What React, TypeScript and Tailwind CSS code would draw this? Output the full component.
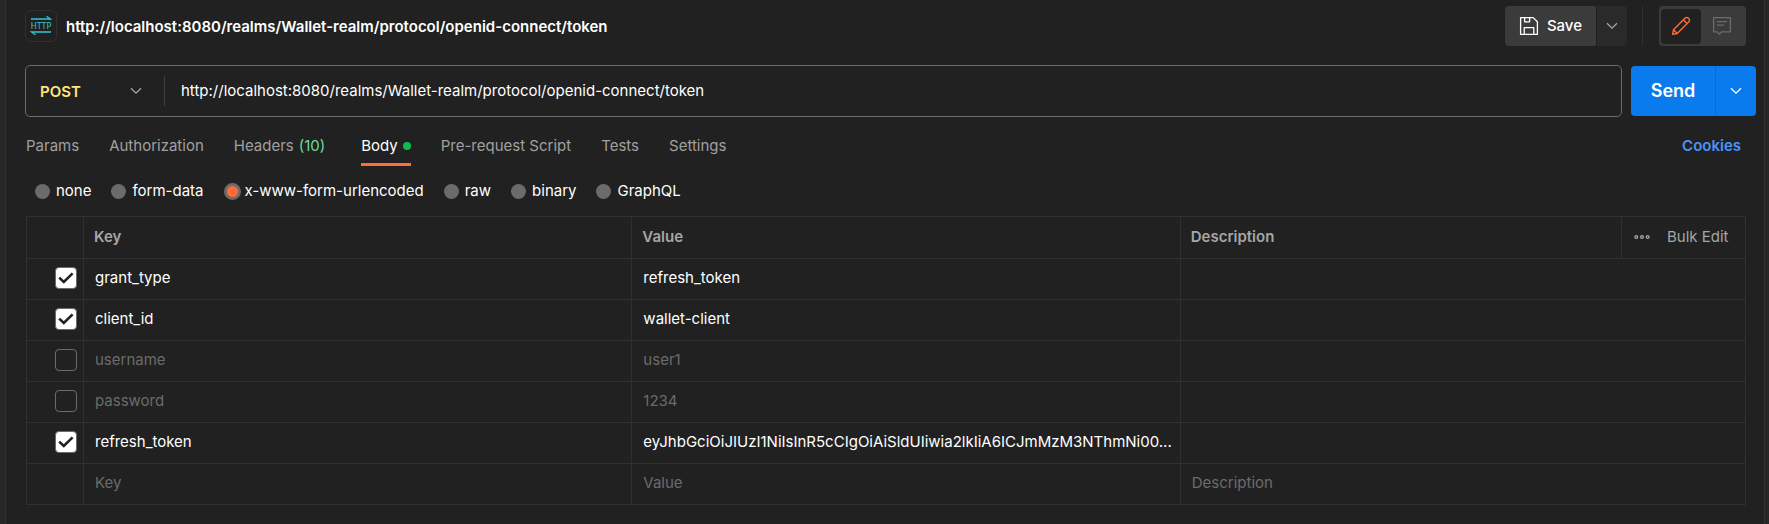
import { useState } from "react";

const METHODS = ["POST", "GET", "PUT", "PATCH", "DELETE"];
const BODY_TYPES = ["none", "form-data", "x-www-form-urlencoded", "raw", "binary", "GraphQL"];
const ENDPOINT = "http://localhost:8080/realms/Wallet-realm/protocol/openid-connect/token";

const INITIAL_ROWS = [
  { key: "grant_type", value: "refresh_token", enabled: true },
  { key: "client_id", value: "wallet-client", enabled: true },
  { key: "username", value: "user1", enabled: false },
  { key: "password", value: "1234", enabled: false },
  {
    key: "refresh_token",
    value: "eyJhbGciOiJIUzI1NiIsInR5cCIgOiAiSldUIiwia2lkIiA6ICJmMzM3NThmNi00...",
    enabled: true,
  },
];

function Chevron({ className }: { className: string }) {
  return (
    <svg className={className} width="12" height="8" viewBox="0 0 12 8" fill="none" stroke="currentColor" strokeWidth="1.3" aria-hidden="true">
      <path d="M1 1.2l5 5 5-5" />
    </svg>
  );
}

function HttpIcon() {
  return (
    <svg width="24" height="22" viewBox="0 0 24 22" fill="none" stroke="#35c4d1" strokeWidth="1.3" aria-hidden="true">
      <path d="M2 4h19.5L17.5 1.2" />
      <path d="M22 17H2.5l4 2.8" />
      <text x="12" y="13.8" textAnchor="middle" fontSize="9" fill="#35c4d1" stroke="none" fontFamily="'DejaVu Sans Condensed', 'DejaVu Sans', sans-serif">
        HTTP
      </text>
    </svg>
  );
}

function SaveIcon() {
  return (
    <svg width="20" height="20" viewBox="0 0 20 20" fill="none" stroke="currentColor" strokeWidth="1.3" strokeLinejoin="round" aria-hidden="true">
      <path d="M1.6 1.6h12.6l4.2 4.2v12.6H1.6z" />
      <path d="M5.6 1.6v4.2h5V1.6M5.2 18.4v-6.8h9.6v6.8" />
    </svg>
  );
}

function PencilIcon() {
  return (
    <svg width="20" height="20" viewBox="0 0 20 20" fill="none" stroke="currentColor" strokeWidth="1.4" strokeLinejoin="round" aria-hidden="true">
      <path d="M1.6 18.4l.9-4.6L14.2 2.1a2.1 2.1 0 0 1 3 0l.7.7a2.1 2.1 0 0 1 0 3L6.2 17.5z" />
      <path d="M2.5 13.8l3.7 3.7M12.4 3.9l3.7 3.7" />
    </svg>
  );
}

function CommentIcon() {
  return (
    <svg width="20" height="20" viewBox="0 0 20 20" fill="none" stroke="currentColor" strokeWidth="1.3" strokeLinejoin="round" aria-hidden="true">
      <path d="M1.6 1.6h16.8v14.2H9.7L7.4 18l-2.3-2.2H1.6z" />
      <path d="M5 5.6h10M5 9.2h7" />
    </svg>
  );
}

export default function App() {
  const [bodyType, setBodyType] = useState("x-www-form-urlencoded");
  const [rows, setRows] = useState(INITIAL_ROWS);
  const toggle = (i: number) => setRows(rows.map((r, n) => (n === i ? { ...r, enabled: !r.enabled } : r)));
  const tab = "h-[34px] border-b-[3px] border-transparent text-[#a0a0a0] flex items-start pt-1";

  return (
    <div className="flex min-h-screen bg-[#262626] pl-[5px] pr-1 font-['Inter',sans-serif] text-[15px] leading-5 text-white">
      <main className="min-w-0 flex-1 border-x border-[#303030] bg-[#212121] pt-1.5 pr-2 pl-[19px]">
        <header className="flex h-10 items-center pr-[10px]">
          <span className="flex size-8 items-center justify-center rounded-md border border-[#303030]">
            <HttpIcon />
          </span>
          <h1 className="ml-[9px] flex-1 pt-0.5 font-semibold">{ENDPOINT}</h1>
          <button className="flex h-10 items-center gap-2 rounded-l-[4px] rounded-r-[2px] bg-[#3b3b3b] px-[14px] font-medium">
            <SaveIcon />
            Save
          </button>
          <button aria-label="Save options" className="ml-px flex h-10 w-[30px] items-center justify-center rounded-r-[4px] bg-[#2a2a2a]">
            <Chevron className="text-[#a6a6a6]" />
          </button>
          <span className="ml-[15px] h-10 w-px bg-[#303030]" />
          <div className="ml-4 flex h-10 items-center rounded-[4px] bg-[#3b3b3b] pr-1 pl-0.5">
            <button aria-label="Edit" className="flex h-[35px] w-10 items-center justify-center rounded-[4px] bg-[#212121] text-[#ff6c37]">
              <PencilIcon />
            </button>
            <button aria-label="Comments" className="flex h-[35px] w-[41px] items-center justify-center text-[#6b6b6b]">
              <CommentIcon />
            </button>
          </div>
        </header>

        <form className="mt-[19px] flex items-center gap-[9px]" onSubmit={(e) => e.preventDefault()}>
          <div className="flex h-[52px] min-w-0 flex-1 items-center rounded-[5px] border border-[#6b6b6b]">
            <div className="grid w-[138px] items-center">
              <select aria-label="Method" className="col-start-1 row-start-1 h-12 appearance-none bg-transparent pt-0.5 pl-[14px] font-semibold text-[#ffe47e] outline-none">
                {METHODS.map((m) => (
                  <option key={m}>{m}</option>
                ))}
              </select>
              <Chevron className="pointer-events-none col-start-1 row-start-1 mr-[22px] justify-self-end text-[#a6a6a6]" />
            </div>
            <span className="h-[30px] w-px bg-[#3f3f3f]" />
            <input aria-label="Request URL" defaultValue={ENDPOINT} className="h-12 min-w-0 flex-1 bg-transparent px-4 pb-0.5 outline-none" />
          </div>
          <div className="flex h-[50px] rounded-[4px] bg-[#097bed]">
            <button type="submit" className="w-[84px] text-lg font-semibold">Send</button>
            <button type="button" aria-label="Send options" className="flex w-[41px] items-center justify-center border-l border-[#1168c9]">
              <Chevron className="text-white" />
            </button>
          </div>
        </form>

        <nav className="mt-[15px] flex items-start gap-[30px] pr-[15px] pl-px">
          <button className={tab}>Params</button>
          <button className={tab}>Authorization</button>
          <button className={tab}>
            Headers<span className="mr-1.5 ml-[5px] text-[#6bdd9a]">(10)</span>
          </button>
          <button className="flex h-[34px] items-start gap-[5px] border-b-[3px] border-[#ff6c37] pt-1">
            Body
            <span className="mt-1.5 size-2 rounded-full bg-[#0cbb52]" />
          </button>
          <button className={tab}>Pre-request Script</button>
          <button className={tab}>Tests</button>
          <button className={tab}>Settings</button>
          <a href="#cookies" className="ml-auto pt-1 font-semibold text-[#4a93f8]">Cookies</a>
        </nav>

        <fieldset className="mt-[15px] flex h-5 items-center gap-5 pl-[10px]">
          {BODY_TYPES.map((type) => (
            <label key={type} className="flex items-center">
              <input
                type="radio"
                name="body-type"
                checked={bodyType === type}
                onChange={() => setBodyType(type)}
                className="mr-1.5 size-[15px] appearance-none rounded-full bg-[#6b6b6b] checked:mr-1 checked:size-[17px] checked:border-[3px] checked:border-[#6b6b6b] checked:bg-[#ff6c37]"
              />
              {type}
            </label>
          ))}
        </fieldset>

        <div className="mt-[15px] pr-[10px] pl-px">
          <table className="w-full table-fixed border-collapse border border-[#303030] text-left [&_td]:border-b [&_td]:border-[#303030] [&_td]:pt-0 [&_td]:pb-0.5 [&_th]:border-b [&_th]:border-[#303030] [&_th]:pt-0 [&_th]:pb-0.5">
            <colgroup>
              <col className="w-[57px]" />
              <col className="w-[31.9%]" />
              <col className="w-[31.9%]" />
              <col />
              <col className="w-[124px]" />
            </colgroup>
            <thead className="text-[#a6a6a6]">
              <tr className="h-[42px]">
                <th aria-label="Enabled" />
                <th scope="col" className="border-l pl-[10px] font-semibold">Key</th>
                <th scope="col" className="border-l pl-[10px] font-semibold">Value</th>
                <th scope="col" className="border-l pl-[10px] font-semibold">Description</th>
                <th className="border-l font-normal">
                  <div className="flex items-center gap-[17px] pl-3">
                    <button aria-label="More options">
                      <svg width="16" height="6" viewBox="0 0 16 6" fill="none" stroke="currentColor" strokeWidth="1.3" aria-hidden="true">
                        <circle cx="2.3" cy="3" r="1.4" />
                        <circle cx="8" cy="3" r="1.4" />
                        <circle cx="13.7" cy="3" r="1.4" />
                      </svg>
                    </button>
                    <button>Bulk Edit</button>
                  </div>
                </th>
              </tr>
            </thead>
            <tbody>
              {rows.map((row, i) => (
                <tr key={row.key} className={row.enabled ? "h-[41px]" : "h-[41px] text-[#6b6b6b]"}>
                  <td>
                    <div className="ml-7 grid size-[22px] place-items-center">
                      <input
                        type="checkbox"
                        aria-label={`Enable ${row.key}`}
                        checked={row.enabled}
                        onChange={() => toggle(i)}
                        className="peer col-start-1 row-start-1 size-[22px] appearance-none rounded-[4px] border border-[#6b6b6b] checked:bg-white"
                      />
                      <svg className="pointer-events-none invisible col-start-1 row-start-1 peer-checked:visible" width="16" height="12" viewBox="0 0 16 12" fill="none" stroke="#212121" strokeWidth="2.6" aria-hidden="true">
                        <path d="M1.2 5.6l4.6 4.4L14.6 1.4" />
                      </svg>
                    </div>
                  </td>
                  <td className="truncate border-l pl-[11px]">{row.key}</td>
                  <td className="truncate border-l pl-[11px]">{row.value}</td>
                  <td colSpan={2} className="border-l" />
                </tr>
              ))}
              <tr className="h-[41px]">
                <td />
                <td className="border-l pl-[11px]">
                  <input aria-label="New key" placeholder="Key" className="block w-full bg-transparent outline-none placeholder:text-[#6b6b6b]" />
                </td>
                <td className="border-l pl-[11px]">
                  <input aria-label="New value" placeholder="Value" className="block w-full bg-transparent outline-none placeholder:text-[#6b6b6b]" />
                </td>
                <td colSpan={2} className="border-l pl-[11px]">
                  <input aria-label="New description" placeholder="Description" className="block w-full bg-transparent outline-none placeholder:text-[#6b6b6b]" />
                </td>
              </tr>
            </tbody>
          </table>
        </div>
      </main>
    </div>
  );
}
